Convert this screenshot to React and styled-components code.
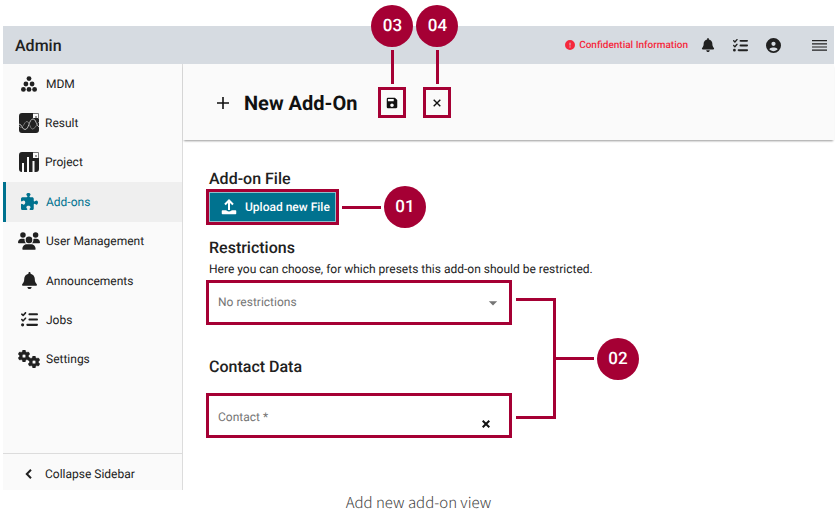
import React from "react";
import styled, { createGlobalStyle, css } from "styled-components";
import { FaBell, FaListCheck, FaPuzzlePiece, FaUsers, FaGear, FaCircleUser, FaCircleExclamation } from "react-icons/fa6";
import { MdSave, MdArrowDropDown } from "react-icons/md";

const ink = "#212121";
const teal = "#00728f";
const crimson = "#a50034";

const GlobalStyle = createGlobalStyle`
  *, *::before, *::after { box-sizing: border-box; }
  body {
    margin: 0;
    background: #fff;
    color: ${ink};
    font-family: Roboto, "Liberation Sans", sans-serif;
    text-rendering: geometricPrecision;
  }
  button, input, select { font: inherit; color: inherit; margin: 0; text-rendering: inherit; }
  svg { display: block; flex: none; }
`;

const Figure = styled.figure`
  margin: 0;
  padding: 26px 1px 0 3px;
`;

const AppBar = styled.header`
  display: flex;
  align-items: center;
  justify-content: space-between;
  height: 38px;
  padding: 0 7px 0 12px;
  background: #d6dbe1;
`;

const AppName = styled.span`
  font-size: 16px;
  font-weight: 500;
`;

const AppActions = styled.div`
  display: flex;
  align-items: center;
`;

const Confidential = styled.span`
  display: flex;
  align-items: center;
  gap: 4px;
  margin-right: 12px;
  color: #f5283c;
  font-size: 10px;
  font-weight: 500;
`;

const IconButton = styled.button`
  display: grid;
  place-items: center;
  width: 16px;
  height: 20px;
  padding: 0;
  border: 0;
  background: none;
  margin-left: ${(p) => p.$gap || 0}px;
`;

const Body = styled.div`
  display: grid;
  grid-template-columns: 180px minmax(0, 1fr);
`;

const Sidebar = styled.nav`
  display: flex;
  flex-direction: column;
  justify-content: space-between;
  background: #fafafa;
  border-right: 1px solid #dcdcdc;
`;

const NavList = styled.ul`
  display: grid;
  grid-auto-rows: 1fr;
  min-height: 315px;
  margin: 0;
  padding: 0;
  list-style: none;
`;

const NavLink = styled.a`
  display: flex;
  align-items: center;
  height: 100%;
  padding-left: 15px;
  gap: ${(p) => (p.$tile ? 5 : 6)}px;
  color: ${ink};
  font-size: 12px;
  text-decoration: none;
  ${(p) =>
    p.$active &&
    css`
      background: #efefef;
      box-shadow: inset 3px 0 ${teal};
      color: ${teal};
    `}
`;

const NavIcon = styled.span`
  display: grid;
  place-items: center;
  width: 22px;
`;

const Collapse = styled.button`
  display: flex;
  align-items: center;
  gap: 12px;
  height: 37px;
  padding: 4px 0 0 21px;
  border: 0;
  border-top: 1px solid #dcdcdc;
  background: none;
  font-size: 12px;
  line-height: 16px;
`;

const TitleBar = styled.header`
  display: flex;
  align-items: center;
  padding: 23px 0 22px 34px;
  background: #fafafa;
  box-shadow: 0 2px 2px -1px rgba(0, 0, 0, 0.4);
`;

const Title = styled.h1`
  margin: 0 21px 0 15px;
  font-size: 20px;
  line-height: 24px;
  font-weight: 700;
  color: #111;
`;

const Marked = styled.div`
  position: relative;
  width: ${(p) => p.$width || "auto"};
  border: 3px solid ${crimson};
  margin-right: ${(p) => p.$after || 0}px;
`;

const ToolButton = styled.button`
  display: grid;
  place-items: center;
  width: 22px;
  height: 25px;
  padding: 0;
  border: 0;
  background: none;
  color: #111;
`;

const Form = styled.form`
  max-width: 329px;
  padding: 29px 0 52px 23px;
`;

const SectionTitle = styled.h2`
  margin: ${(p) => p.$before || 0}px 0 ${(p) => p.$after || 0}px 3px;
  font-size: 16px;
  line-height: 20px;
  font-weight: 500;
  white-space: nowrap;
`;

const Hint = styled.p`
  margin: 0 0 0 3px;
  font-size: 12px;
  line-height: 22px;
  white-space: nowrap;
`;

const UploadButton = styled.button`
  display: flex;
  align-items: center;
  gap: 8px;
  width: 100%;
  height: 30px;
  padding: 0 8px 0 11px;
  border: 1px solid #8fbfcb;
  background: ${teal};
  color: #fff;
  font-size: 12px;
  font-weight: 500;
  white-space: nowrap;
`;

const Field = styled.div`
  display: flex;
  align-items: center;
  height: 39px;
  color: #757575;
  font-size: 12px;
`;

const Select = styled.select`
  flex: 1;
  align-self: stretch;
  min-width: 0;
  padding: 0 0 2px 9px;
  border: 0;
  appearance: none;
  background: transparent;
`;

const Input = styled.input`
  flex: 1;
  align-self: stretch;
  min-width: 0;
  padding: 2px 0 0 9px;
  border: 0;
  background: transparent;
  &::placeholder { color: #757575; opacity: 1; }
`;

const Arrow = styled.span`
  margin-right: 6px;
  pointer-events: none;
`;

const ClearButton = styled.button`
  margin: 16px 19px 0 0;
  padding: 0;
  border: 0;
  background: none;
  color: #111;
`;

const FieldGroup = styled.div`
  position: relative;
`;

const Badge = styled.span`
  display: grid;
  place-items: center;
  flex: none;
  width: 42px;
  height: 42px;
  border-radius: 50%;
  background: ${crimson};
  color: #fff;
  font-size: 17px;
  font-weight: 500;
`;

const CalloutAbove = styled.div`
  position: absolute;
  z-index: 2;
  bottom: 100%;
  left: 50%;
  display: flex;
  flex-direction: column;
  align-items: center;
  gap: 3px;
  padding-bottom: 6px;
  transform: translateX(-50%);
  &::after { content: ""; width: 3px; height: 34px; background: ${crimson}; }
`;

const CalloutBeside = styled.div`
  position: absolute;
  top: 50%;
  left: 100%;
  display: flex;
  align-items: center;
  gap: 3px;
  padding-left: 6px;
  transform: translateY(-50%);
  &::before { content: ""; width: 39px; height: 3px; background: ${crimson}; }
`;

const Bracket = styled.div`
  position: absolute;
  top: 18px;
  bottom: 19px;
  left: 100%;
  display: flex;
  align-items: center;
  margin-left: 4px;
  &::before {
    content: "";
    align-self: stretch;
    width: 40px;
    border: 3px solid ${crimson};
    border-left: 0;
  }
  &::after { content: ""; order: 1; width: 38px; height: 3px; background: ${crimson}; }
  ${Badge} { order: 2; margin-left: 3px; }
`;

const Caption = styled.figcaption`
  padding-top: 3px;
  color: #444;
  font-family: "Noto Sans CJK KR", "Noto Sans", sans-serif;
  font-size: 15px;
  font-weight: 300;
  line-height: 20px;
  text-align: center;
`;

const PyramidIcon = () => (
  <svg width="16" height="16" viewBox="0 0 16 16" fill="currentColor" aria-hidden="true">
    <circle cx="8" cy="2.6" r="2.4" />
    <circle cx="4.9" cy="8" r="2.4" />
    <circle cx="11.1" cy="8" r="2.4" />
    <circle cx="2.4" cy="13.4" r="2.4" />
    <circle cx="8" cy="13.4" r="2.4" />
    <circle cx="13.6" cy="13.4" r="2.4" />
  </svg>
);

const ResultIcon = () => (
  <svg width="20" height="20" viewBox="0 0 20 20" fill="none" aria-hidden="true">
    <path d="M3 0H14V5H20V17a3 3 0 0 1-3 3H3a3 3 0 0 1-3-3V3a3 3 0 0 1 3-3Z" fill={ink} />
    <path d="M14 .5H19.5V6" stroke="#777" strokeWidth="1" />
    <path d="M16 3h2v2h-2Z" fill="#999" />
    <path d="M0 11C3 11 3 16.5 6 16.5C10 16.5 10 6 14 6C17 6 17 12 20 14" stroke="#bbb" strokeWidth="1" />
    <path d="M0 13C4 18 5 8 8 8.5C11 9 11 17 14 16C17 15 18 10 20 9" stroke="#777" strokeWidth="1" />
  </svg>
);

const ProjectIcon = () => (
  <svg width="20" height="20" viewBox="0 0 20 20" fill="none" aria-hidden="true">
    <path d="M3 0H14V6H20V17a3 3 0 0 1-3 3H3a3 3 0 0 1-3-3V3a3 3 0 0 1 3-3Z" fill={ink} />
    <path d="M14 .5H19.5V6" stroke="#777" strokeWidth="1" />
    <path d="M16 3h2v2h-2Z" fill="#999" />
    <path d="M3 11H5V20H3ZM8 5H10V20H8ZM13.5 9H15.5V20H13.5Z" fill="#fafafa" />
  </svg>
);

const GearsIcon = () => (
  <svg width="22" height="18" viewBox="0 0 22 18" stroke={ink} strokeWidth="16" aria-hidden="true">
    <FaGear size={12} x="0" y="0" stroke={ink} strokeWidth="20" />
    <FaGear size={12} x="10" y="6" stroke={ink} strokeWidth="20" />
  </svg>
);

const UploadIcon = () => (
  <svg width="16" height="16" viewBox="0 0 16 16" fill="none" stroke="currentColor" aria-hidden="true">
    <path d="M8 11V2M4 5.5L8 1.5L12 5.5" strokeWidth="2" />
    <path d="M1.5 12H5Q8 14.5 11 12H14.5V14.5H1.5Z" fill="currentColor" strokeWidth="1.5" strokeLinejoin="round" />
  </svg>
);

const MenuIcon = () => (
  <svg width="15" height="11" viewBox="0 0 15 11" fill="currentColor" aria-hidden="true">
    <path d="M0 0H15V1.2H0ZM0 3.2H15V4.4H0ZM0 6.4H15V7.6H0ZM0 9.6H15V10.8H0Z" />
  </svg>
);

const PlusIcon = () => (
  <svg width="12" height="12" viewBox="0 0 12 12" stroke="#111" strokeWidth="1.6" aria-hidden="true">
    <path d="M6 0V12M0 6H12" />
  </svg>
);

const CrossIcon = ({ weight }) => (
  <svg width="8" height="8" viewBox="0 0 8 8" stroke="currentColor" strokeWidth={weight} aria-hidden="true">
    <path d="M.7 .7L7.3 7.3M7.3 .7L.7 7.3" />
  </svg>
);

const ChevronIcon = () => (
  <svg width="9" height="10" viewBox="0 0 9 10" fill="none" stroke="currentColor" strokeWidth="2" aria-hidden="true">
    <path d="M7 .8L2.8 5L7 9.2" />
  </svg>
);

const navItems = [
  { label: "MDM", icon: <PyramidIcon /> },
  { label: "Result", icon: <ResultIcon />, tile: true },
  { label: "Project", icon: <ProjectIcon />, tile: true },
  { label: "Add-ons", icon: <FaPuzzlePiece size={17} />, active: true },
  { label: "User Management", icon: <FaUsers size={22} /> },
  { label: "Announcements", icon: <FaBell size={17} /> },
  { label: "Jobs", icon: <FaListCheck size={17} /> },
  { label: "Settings", icon: <GearsIcon /> },
];

export default function App() {
  return (
    <>
      <GlobalStyle />
      <Figure>
        <AppBar>
          <AppName>Admin</AppName>
          <AppActions>
            <Confidential>
              <FaCircleExclamation size={10} />
              Confidential Information
            </Confidential>
            <IconButton aria-label="Notifications"><FaBell size={14} /></IconButton>
            <IconButton aria-label="Jobs" $gap={16}><FaListCheck size={15} /></IconButton>
            <IconButton aria-label="Account" $gap={17}><FaCircleUser size={15} /></IconButton>
            <IconButton aria-label="Menu" $gap={30}><MenuIcon /></IconButton>
          </AppActions>
        </AppBar>
        <Body>
          <Sidebar>
            <NavList>
              {navItems.map(({ label, icon, tile, active }) => (
                <li key={label}>
                  <NavLink href="#" $tile={tile} $active={active} aria-current={active ? "page" : undefined}>
                    <NavIcon>{icon}</NavIcon>
                    {label}
                  </NavLink>
                </li>
              ))}
            </NavList>
            <Collapse>
              <ChevronIcon />
              Collapse Sidebar
            </Collapse>
          </Sidebar>
          <main>
            <TitleBar>
              <PlusIcon />
              <Title>New Add-On</Title>
              <Marked $after={17}>
                <ToolButton aria-label="Save"><MdSave size={14} /></ToolButton>
                <CalloutAbove><Badge>03</Badge></CalloutAbove>
              </Marked>
              <Marked>
                <ToolButton aria-label="Close"><CrossIcon weight={1.4} /></ToolButton>
                <CalloutAbove><Badge>04</Badge></CalloutAbove>
              </Marked>
            </TitleBar>
            <Form>
              <SectionTitle>Add-on File</SectionTitle>
              <Marked $width="133px">
                <UploadButton type="button">
                  <UploadIcon />
                  Upload new File
                </UploadButton>
                <CalloutBeside><Badge>01</Badge></CalloutBeside>
              </Marked>
              <SectionTitle $before={13}>Restrictions</SectionTitle>
              <Hint id="restrictions-hint">Here you can choose, for which presets this add-on should be restricted.</Hint>
              <FieldGroup>
                <Marked>
                  <Field>
                    <Select aria-label="Restrictions" aria-describedby="restrictions-hint">
                      <option>No restrictions</option>
                    </Select>
                    <Arrow><MdArrowDropDown size={20} /></Arrow>
                  </Field>
                </Marked>
                <SectionTitle $before={32} $after={16}>Contact Data</SectionTitle>
                <Marked>
                  <Field>
                    <Input aria-label="Contact" placeholder="Contact *" required />
                    <ClearButton type="button" aria-label="Clear contact">
                      <CrossIcon weight={2} />
                    </ClearButton>
                  </Field>
                </Marked>
                <Bracket><Badge>02</Badge></Bracket>
              </FieldGroup>
            </Form>
          </main>
        </Body>
        <Caption>Add new add-on view</Caption>
      </Figure>
    </>
  );
}
